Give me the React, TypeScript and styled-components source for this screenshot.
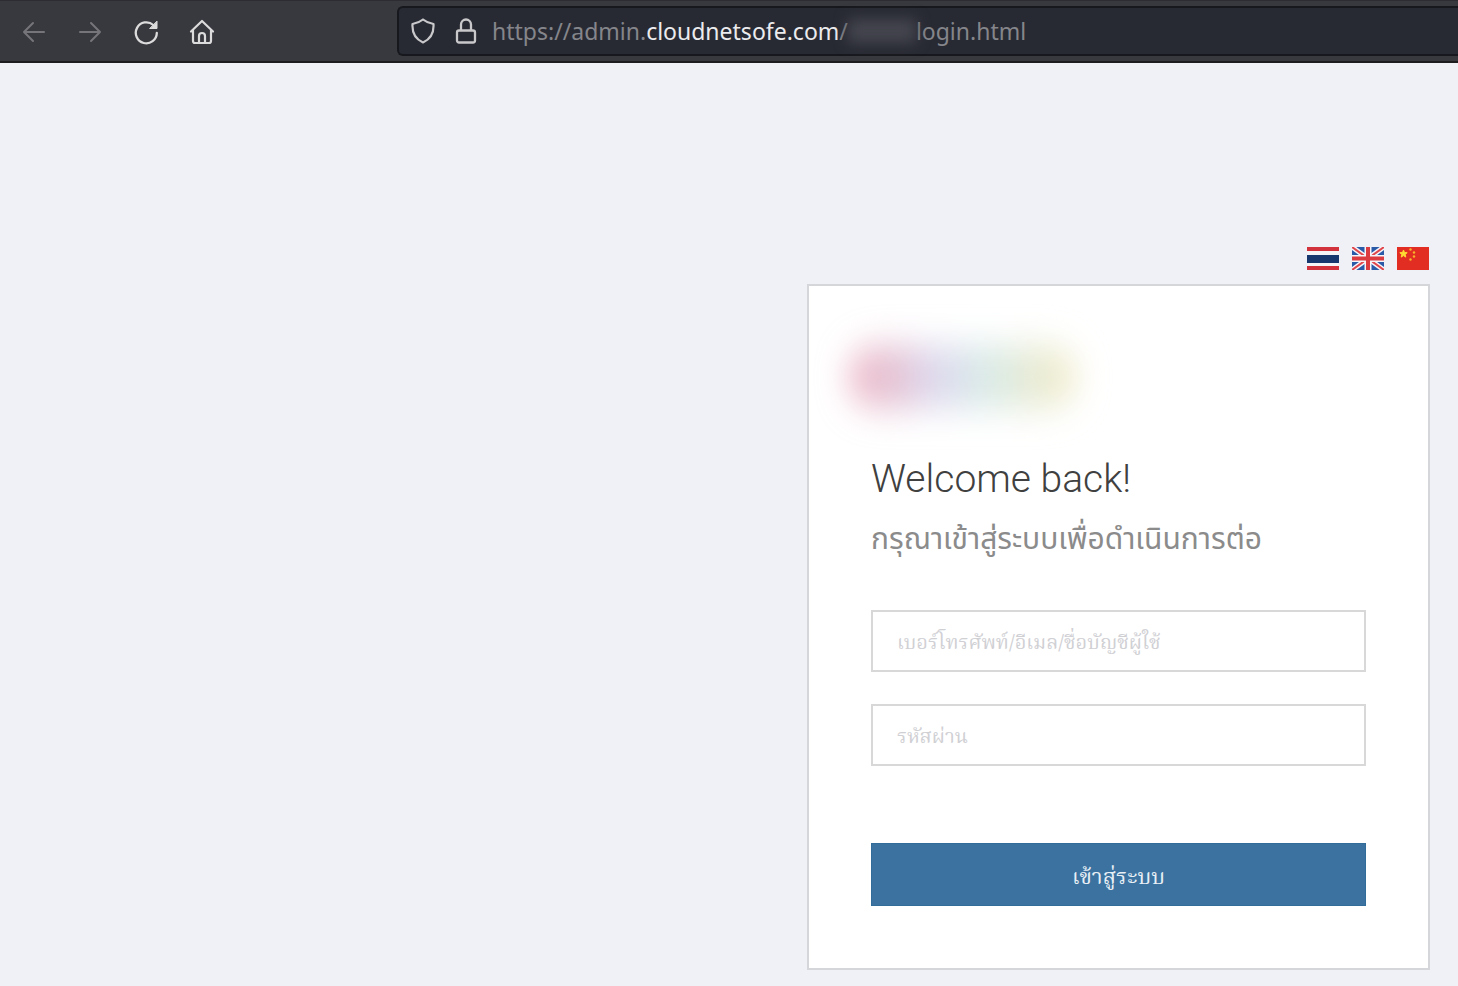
import React from "react";
import styled, { createGlobalStyle } from "styled-components";

const GlobalStyle = createGlobalStyle`
  *, *::before, *::after { box-sizing: border-box; }
  body {
    margin: 0;
    background: #f0f1f7;
    font-family: Roboto, "Noto Sans Thai", "Liberation Sans", sans-serif;
  }
`;

const thaiSerif = `"Noto Serif Thai", "Liberation Serif", serif`;

const Toolbar = styled.header`
  display: flex;
  align-items: center;
  height: 63px;
  padding-left: 14px;
  background: #38383f;
  border-top: 1px solid #2c2c32;
  border-bottom: 2px solid #1d1d20;
  overflow: hidden;
`;

const NavGroup = styled.nav`
  display: flex;
  flex: none;
  gap: 16px;
  width: 383px;
`;

const NavButton = styled.button`
  display: flex;
  align-items: center;
  justify-content: center;
  width: 40px;
  height: 40px;
  padding: 2px 0 0;
  border: 0;
  background: none;
  color: #dcdcdc;

  &:disabled { color: #76767a; }
`;

const AddressBar = styled.div`
  display: flex;
  flex: 1;
  align-items: center;
  height: 50px;
  padding-left: 12px;
  background: #282a33;
  border: 2px solid #17181d;
  border-right: 0;
  border-radius: 6px 0 0 6px;
  color: #c9c9cb;
`;

const SiteIcons = styled.div`
  display: flex;
  flex: none;
  gap: 19px;
  margin-right: 14px;
`;

const Url = styled.div`
  display: flex;
  align-items: center;
  font: 23px/34px "Noto Sans", sans-serif;
  color: #85868b;
  white-space: nowrap;
`;

const Domain = styled.span`
  color: #ececee;
`;

const HiddenPath = styled.span`
  width: 68px;
  height: 24px;
  background: #44454e;
  filter: blur(7px);
`;

const Page = styled.main`
  display: flex;
  flex-direction: column;
  align-items: flex-end;
  padding: 184px 28px 16px;
`;

const Languages = styled.div`
  display: flex;
  gap: 13px;
  padding-right: 1px;
  margin-bottom: 14px;
`;

const FlagLink = styled.a`
  display: block;
  width: 32px;
  height: 23px;

  svg { display: block; }
`;

const Card = styled.section`
  width: 100%;
  max-width: 623px;
  padding: 46px 62px 62px;
  background: #fff;
  border: 2px solid #d5d6da;
`;

const Logo = styled.svg`
  display: block;
  width: 300px;
  height: 92px;
  margin: 0 0 31px -48px;
  overflow: visible;
`;

const Title = styled.h1`
  margin: 0;
  font-size: 39px;
  line-height: 48px;
  font-weight: 300;
  color: #404040;
`;

const Subtitle = styled.p`
  margin: 14px 0 49px;
  font-size: 30px;
  line-height: 44px;
  height: 44px;
  color: #8b8b8b;
  white-space: nowrap;
`;

const Form = styled.form`
  display: flex;
  flex-direction: column;
`;

const Field = styled.input`
  width: 100%;
  height: 62px;
  margin-bottom: 32px;
  padding: 5px 24px 0;
  border: 2px solid #d8d8d8;
  border-radius: 0;
  background: #fff;
  font: 20px/32px ${thaiSerif};
  color: #333;

  &::placeholder { color: #d0d0d4; opacity: 1; }
`;

const Submit = styled.button`
  height: 63px;
  margin-top: 45px;
  padding: 8px 0 0;
  border: 1px solid #316c9a;
  background: #3b72a0;
  color: #e8eff5;
  font: 22px/32px ${thaiSerif};
`;

const stroke = {
  fill: "none",
  stroke: "currentColor",
  strokeWidth: 2,
  strokeLinecap: "round" as const,
  strokeLinejoin: "round" as const,
};

const ArrowIcon = ({ forward = false }: { forward?: boolean }) => (
  <svg width="24" height="24" viewBox="0 0 24 24" {...stroke}>
    <path d={forward ? "M2 12h20M13 3l9 9-9 9" : "M22 12H2M11 3l-9 9 9 9"} />
  </svg>
);

const ReloadIcon = () => (
  <svg width="26" height="26" viewBox="0 0 26 26" {...stroke} strokeWidth="2.3">
    <path d="M23.800 14a10.500 10.500 0 1 1-3.500-8" />
    <path d="M24 2.500v7h-7z" fill="currentColor" strokeWidth="1" />
  </svg>
);

const HomeIcon = () => (
  <svg width="26" height="26" viewBox="0 0 26 26" {...stroke} strokeWidth="2.2">
    <path d="M2 12.500 13 2l11 10.500M4 11v11q0 2 2 2h14q2 0 2-2V11" />
    <path d="M10 24v-7q0-3 3-3t3 3v7" />
  </svg>
);

const ShieldIcon = () => (
  <svg width="24" height="26" viewBox="0 0 24 26" {...stroke} strokeWidth="2.2">
    <path d="M12 1.500c3 2.500 6 3.700 10.500 4.500C23 14 20 21 12 24.500 4 21 1 14 1.500 6 6 5.200 9 4 12 1.500z" />
  </svg>
);

const LockIcon = () => (
  <svg width="24" height="26" viewBox="0 0 24 26" {...stroke} strokeWidth="2.3">
    <rect x="3" y="12.500" width="18" height="12" rx="2" />
    <path d="M7 12V6.500a5 5 0 0 1 10 0V12" />
  </svg>
);

const ThaiFlag = () => (
  <svg width="32" height="23" viewBox="0 0 32 23">
    <path fill="#f5f5f8" d="M0 0h32v23H0z" />
    <path fill="#d2323c" d="M0 0h32v4H0zM0 19h32v4H0z" />
    <path fill="#17376f" d="M0 8h32v8H0z" />
  </svg>
);

const BritishFlag = () => (
  <svg width="32" height="23" viewBox="0 0 32 23">
    <path fill="#2a5ba8" d="M0 0h32v23H0z" />
    <path stroke="#f5f5fa" strokeWidth="5" d="M0 0l32 23M32 0L0 23" />
    <path stroke="#e0474c" strokeWidth="2" d="M0 0l32 23M32 0L0 23" />
    <path stroke="#f5f5fa" strokeWidth="7" d="M16 0v23M0 11.500h32" />
    <path stroke="#dc3c40" strokeWidth="4" d="M16 0v23M0 11.500h32" />
  </svg>
);

const ChineseFlag = () => (
  <svg width="32" height="23" viewBox="0 0 32 23">
    <path fill="#e22d22" d="M0 0h32v23H0z" />
    <path
      fill="#ffdc32"
      stroke="#ffdc32"
      d="M6.500 3l1 2.500 2.700.2-2.100 1.700.7 2.700-2.300-1.500-2.300 1.500.7-2.700-2.100-1.700 2.700-.2z"
    />
    <g fill="#f6b52b">
      <circle cx="13.500" cy="2.500" r="1.200" />
      <circle cx="17" cy="5.500" r="1.200" />
      <circle cx="17" cy="9.500" r="1.200" />
      <circle cx="13.500" cy="12.500" r="1.200" />
    </g>
  </svg>
);

const languages = [
  { code: "th", label: "ไทย", Flag: ThaiFlag },
  { code: "en", label: "English", Flag: BritishFlag },
  { code: "zh", label: "中文", Flag: ChineseFlag },
];

export default function App() {
  return (
    <>
      <GlobalStyle />
      <Toolbar>
        <NavGroup>
          <NavButton aria-label="Back" disabled><ArrowIcon /></NavButton>
          <NavButton aria-label="Forward" disabled><ArrowIcon forward /></NavButton>
          <NavButton aria-label="Reload"><ReloadIcon /></NavButton>
          <NavButton aria-label="Home"><HomeIcon /></NavButton>
        </NavGroup>
        <AddressBar>
          <SiteIcons>
            <ShieldIcon />
            <LockIcon />
          </SiteIcons>
          <Url>
            <span>https://admin.</span>
            <Domain>cloudnetsofe.com</Domain>
            <span>/</span>
            <HiddenPath />
            <span>login.html</span>
          </Url>
        </AddressBar>
      </Toolbar>
      <Page>
        <Languages>
          {languages.map(({ code, label, Flag }) => (
            <FlagLink key={code} href={`?lang=${code}`} aria-label={label}>
              <Flag />
            </FlagLink>
          ))}
        </Languages>
        <Card>
          <Logo viewBox="0 0 300 92" aria-hidden="true">
            <defs>
              <linearGradient id="logoHues">
                <stop offset="0" stopColor="#f0bccb" />
                <stop offset="0.18" stopColor="#e6c2d2" />
                <stop offset="0.38" stopColor="#dedaef" />
                <stop offset="0.6" stopColor="#d9ebe8" />
                <stop offset="0.82" stopColor="#e9ebd4" />
                <stop offset="1" stopColor="#f5efd0" />
              </linearGradient>
              <filter id="logoSoft" x="-30%" y="-100%" width="160%" height="300%">
                <feGaussianBlur stdDeviation="15 17" />
              </filter>
            </defs>
            <rect x="24" y="13" width="232" height="64" rx="32" fill="url(#logoHues)" filter="url(#logoSoft)" />
          </Logo>
          <Title>Welcome back!</Title>
          <Subtitle>กรุณาเข้าสู่ระบบเพื่อดำเนินการต่อ</Subtitle>
          <Form>
            <Field type="text" aria-label="เบอร์โทรศัพท์/อีเมล/ชื่อบัญชีผู้ใช้" placeholder="เบอร์โทรศัพท์/อีเมล/ชื่อบัญชีผู้ใช้" />
            <Field type="password" aria-label="รหัสผ่าน" placeholder="รหัสผ่าน" />
            <Submit type="button">เข้าสู่ระบบ</Submit>
          </Form>
        </Card>
      </Page>
    </>
  );
}
